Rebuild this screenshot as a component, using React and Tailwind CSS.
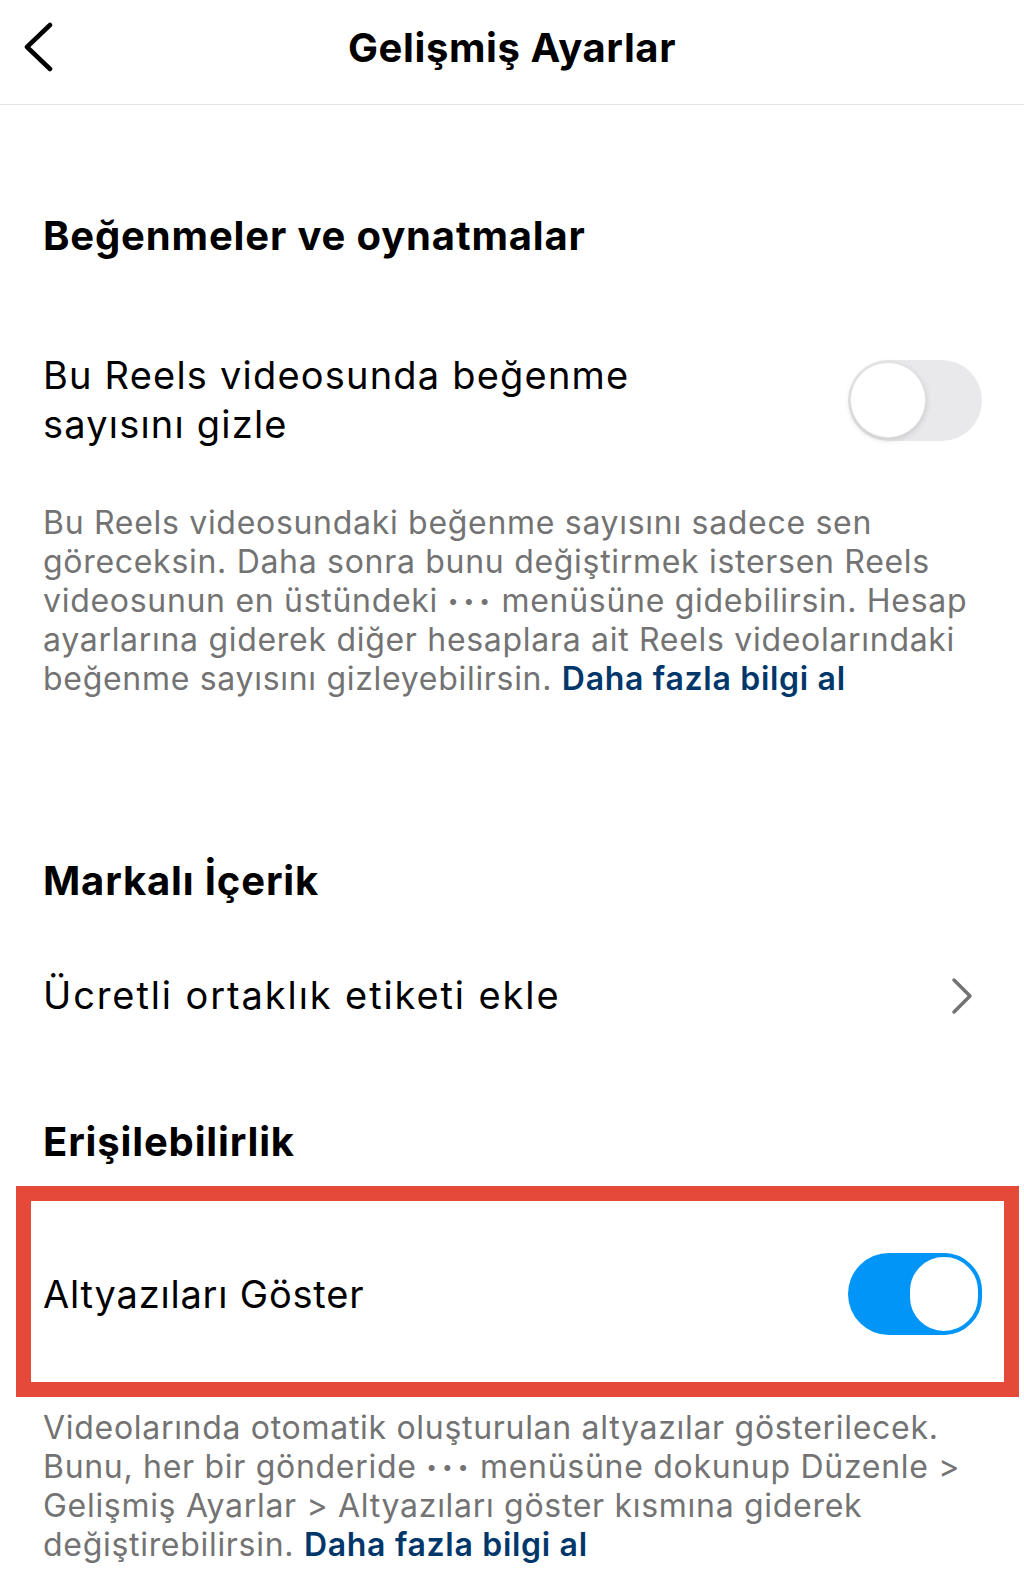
import React from 'react';

const font = { fontFamily: 'Inter, "Noto Sans", sans-serif' };

const Dots = () => (
  <span className="inline-block align-middle text-[19px] tracking-[5px] leading-none -mt-[4px] mr-[-3px]">•••</span>
);

const Toggle = ({ on }) =>
  on ? (
    <div className="w-[134px] h-[82px] rounded-full bg-[#0095f6] flex items-center justify-end shrink-0">
      <div className="w-[76px] h-[82px] rounded-full bg-white border-[4px] border-[#0095f6]" />
    </div>
  ) : (
    <div className="w-[134px] h-[81px] rounded-full bg-[#e9e9eb] flex items-center pl-[2px] shrink-0">
      <div className="w-[76px] h-[76px] rounded-full bg-white shadow-[0_2px_6px_rgba(0,0,0,0.15)] border border-[#e4e4e4]" />
    </div>
  );

export default function App() {
  return (
    <div className="min-h-[1594px] bg-white text-black" style={font}>
      <header className="h-[105px] border-b border-[#e3e3e3] grid grid-cols-[1fr_auto_1fr] items-start">
        <div className="pl-[23px] pt-[22px]">
          <svg width="30" height="50" viewBox="0 0 30 50" fill="none">
            <path d="M27 3 L4 25 L27 47" stroke="#000" strokeWidth="4.5" strokeLinecap="round" strokeLinejoin="round" />
          </svg>
        </div>
        <h1 className="pt-[24px] text-[40px] leading-[48px] font-bold tracking-[0.6px]">Gelişmiş Ayarlar</h1>
        <div />
      </header>

      <main className="pl-[43px] pr-[42px]">
        <h2 className="mt-[107px] text-[40px] leading-[48px] font-bold tracking-[0.85px]">Beğenmeler ve oynatmalar</h2>

        <div className="mt-[91px] flex items-center justify-between">
          <p className="text-[38px] leading-[49px] tracking-[1.2px]">
            Bu Reels videosunda beğenme
            <br />
            sayısını gizle
          </p>
          <Toggle on={false} />
        </div>

        <p className="mt-[54px] text-[32px] leading-[39px] text-[#737373] tracking-[0.7px] whitespace-nowrap">
          Bu Reels videosundaki beğenme sayısını sadece sen
          <br />
          göreceksin. Daha sonra bunu değiştirmek istersen Reels
          <br />
          videosunun en üstündeki <Dots /> menüsüne gidebilirsin. Hesap
          <br />
          ayarlarına giderek diğer hesaplara ait Reels videolarındaki
          <br />
          beğenme sayısını gizleyebilirsin.{' '}
          <span className="font-semibold text-[#00376b]">Daha fazla bilgi al</span>
        </p>

        <h2 className="mt-[159px] text-[40px] leading-[48px] font-bold tracking-[0.85px]">Markalı İçerik</h2>

        <div className="mt-[66px] flex items-center justify-between">
          <p className="text-[38px] leading-[49px] tracking-[1.9px]">Ücretli ortaklık etiketi ekle</p>
          <svg width="24" height="40" viewBox="0 0 24 40" fill="none" className="mr-[8px]">
            <path d="M4 4 L20 20 L4 36" stroke="#737373" strokeWidth="3.5" strokeLinecap="round" strokeLinejoin="round" />
          </svg>
        </div>

        <h2 className="mt-[98px] text-[40px] leading-[48px] font-bold tracking-[0.85px]">Erişilebilirlik</h2>

        <div className="mt-[20px] ml-[-27px] mr-[-37px] border-[15px] border-[#e5493a] pl-[12px] pr-[22px] pt-[52px] pb-[47px] flex items-center justify-between">
          <p className="text-[38px] leading-[49px] tracking-[0.8px]">Altyazıları Göster</p>
          <Toggle on />
        </div>

        <p className="mt-[11px] text-[32px] leading-[39px] text-[#737373] tracking-[0.7px] whitespace-nowrap">
          Videolarında otomatik oluşturulan altyazılar gösterilecek.
          <br />
          Bunu, her bir gönderide <Dots /> menüsüne dokunup Düzenle &gt;
          <br />
          Gelişmiş Ayarlar &gt; Altyazıları göster kısmına giderek
          <br />
          değiştirebilirsin. <span className="font-semibold text-[#00376b]">Daha fazla bilgi al</span>
        </p>
      </main>
    </div>
  );
}
